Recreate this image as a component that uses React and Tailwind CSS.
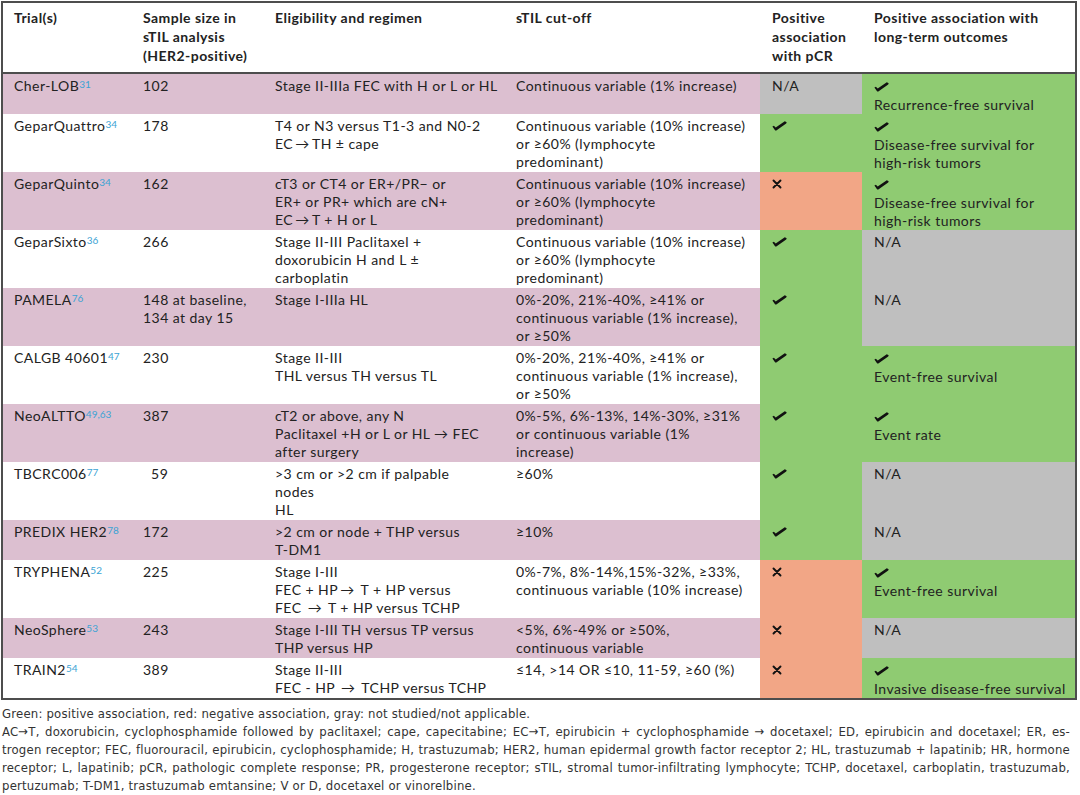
import React from "react";

const PINK = "bg-[#dcbfd0]";
const WHITE = "bg-white";
const CELL = {
  na: "bg-[#bfbfbf]",
  yes: "bg-[#8fcb72]",
  no: "bg-[#f2a686]",
};

const rows = [
  {
    trial: "Cher-LOB",
    sup: "31",
    n: ["102"],
    elig: ["Stage II-IIIa FEC with H or L or HL"],
    cut: ["Continuous variable (1% increase)"],
    pcr: "na",
    out: "yes",
    outText: ["Recurrence-free survival"],
  },
  {
    trial: "GeparQuattro",
    sup: "34",
    n: ["178"],
    elig: ["T4 or N3 versus T1-3 and N0-2", "EC\u2009\u2192\u2009TH \u00b1 cape"],
    cut: ["Continuous variable (10% increase)", "or \u226560% (lymphocyte", "predominant)"],
    pcr: "yes",
    out: "yes",
    outText: ["Disease-free survival for", "high-risk tumors"],
  },
  {
    trial: "GeparQuinto",
    sup: "34",
    n: ["162"],
    elig: ["cT3 or CT4 or ER+/PR\u2212 or", "ER+ or PR+ which are cN+", "EC\u2009\u2192\u2009T + H or L"],
    cut: ["Continuous variable (10% increase)", "or \u226560% (lymphocyte", "predominant)"],
    pcr: "no",
    out: "yes",
    outText: ["Disease-free survival for", "high-risk tumors"],
  },
  {
    trial: "GeparSixto",
    sup: "36",
    n: ["266"],
    elig: ["Stage II-III Paclitaxel +", "doxorubicin H and L \u00b1", "carboplatin"],
    cut: ["Continuous variable (10% increase)", "or \u226560% (lymphocyte", "predominant)"],
    pcr: "yes",
    out: "na",
  },
  {
    trial: "PAMELA",
    sup: "76",
    n: ["148 at baseline,", "134 at day 15"],
    elig: ["Stage I-IIIa HL"],
    cut: ["0%-20%, 21%-40%, \u226541% or", "continuous variable (1% increase),", "or \u226550%"],
    pcr: "yes",
    out: "na",
  },
  {
    trial: "CALGB 40601",
    sup: "47",
    n: ["230"],
    elig: ["Stage II-III", "THL versus TH versus TL"],
    cut: ["0%-20%, 21%-40%, \u226541% or", "continuous variable (1% increase),", "or \u226550%"],
    pcr: "yes",
    out: "yes",
    outText: ["Event-free survival"],
  },
  {
    trial: "NeoALTTO",
    sup: "49,63",
    n: ["387"],
    elig: ["cT2 or above, any N", "Paclitaxel +H or L or HL \u2192 FEC", "after surgery"],
    cut: ["0%-5%, 6%-13%, 14%-30%, \u226531%", "or continuous variable (1%", "increase)"],
    pcr: "yes",
    out: "yes",
    outText: ["Event rate"],
  },
  {
    trial: "TBCRC006",
    sup: "77",
    n: ["\u00a0\u00a059"],
    elig: [">3 cm or >2 cm if palpable", "nodes", "HL"],
    cut: ["\u226560%"],
    pcr: "yes",
    out: "na",
  },
  {
    trial: "PREDIX HER2",
    sup: "78",
    n: ["172"],
    elig: [">2 cm or node + THP versus", "T-DM1"],
    cut: ["\u226510%"],
    pcr: "yes",
    out: "na",
  },
  {
    trial: "TRYPHENA",
    sup: "52",
    n: ["225"],
    elig: ["Stage I-III", "FEC + HP\u2009\u2192\u2009 T + HP versus", "FEC \u2009\u2192\u2009 T + HP versus TCHP"],
    cut: ["0%-7%, 8%-14%,15%-32%, \u226533%,", "continuous variable (10% increase)"],
    pcr: "no",
    out: "yes",
    outText: ["Event-free survival"],
  },
  {
    trial: "NeoSphere",
    sup: "53",
    n: ["243"],
    elig: ["Stage I-III TH versus TP versus", "THP versus HP"],
    cut: ["<5%, 6%-49% or \u226550%,", "continuous variable"],
    pcr: "no",
    out: "na",
  },
  {
    trial: "TRAIN2",
    sup: "54",
    n: ["389"],
    elig: ["Stage II-III", "FEC - HP \u2009\u2192\u2009 TCHP versus TCHP"],
    cut: ["\u226414, >14 OR \u226410, 11-59, \u226560 (%)"],
    pcr: "no",
    out: "yes",
    outText: ["Invasive disease-free survival"],
  },
];

// brush style tick, like the one in the printed table
const Check = () => (
  <svg width="15" height="10" viewBox="0 0 15 10" className="inline-block">
    <path d="M0.4 5.6 L1.9 4.8 L3.7 6.6 L12.8 0.3 L14.7 1.2 L14.2 2.6 L4.3 9.4 L3.2 9.4 Z" fill="#111" />
  </svg>
);

const Cross = () => (
  <svg width="10" height="10" viewBox="0 0 10 10" className="inline-block">
    <path d="M1.5 1.5 L8.5 8.5 M8.5 1.5 L1.5 8.5" stroke="#111" strokeWidth="1.9" strokeLinecap="round" />
  </svg>
);

const Lines = ({ lines }) => (
  <>
    {lines.map((l, i) => (
      <div key={i} className="whitespace-pre">
        {l}
      </div>
    ))}
  </>
);

const cellPad = "pl-[11px] pt-[3px] pb-[1px]";

function Row({ row, idx }) {
  const bg = idx % 2 === 0 ? PINK : WHITE;
  return (
    <div className="grid grid-cols-[129px_132px_241px_255px_102px_213px] leading-[18px]">
      <div className={`${bg} ${cellPad}`}>
        {row.trial}
        <sup className="text-[10px] text-[#3ba3d4] tracking-normal relative -top-[3px]">{row.sup}</sup>
      </div>
      <div className={`${bg} ${cellPad}`}>
        <Lines lines={row.n} />
      </div>
      <div className={`${bg} ${cellPad}`}>
        <Lines lines={row.elig} />
      </div>
      <div className={`${bg} ${cellPad}`}>
        <Lines lines={row.cut} />
      </div>
      <div className={`${CELL[row.pcr]} pl-[12px] pt-[3px]`}>
        {row.pcr === "na" && "N/A"}
        {row.pcr === "yes" && (
          <div className="h-[18px] flex items-center">
            <Check />
          </div>
        )}
        {row.pcr === "no" && (
          <div className="h-[18px] flex items-center">
            <Cross />
          </div>
        )}
      </div>
      <div className={`${CELL[row.out]} pl-[12px] pt-[3px]`}>
        {row.out === "na" && "N/A"}
        {row.out === "yes" && (
          <>
            <div className="h-[19px] flex items-center">
              <Check />
            </div>
            <Lines lines={row.outText} />
          </>
        )}
      </div>
    </div>
  );
}

export default function App() {
  return (
    <div className="w-[1080px] h-[795px] bg-white overflow-hidden font-['Lato',sans-serif] text-[14px] tracking-[0.45px] text-[#222]">
      <div className="ml-[1px] mt-[1px] w-[1076px] border-2 border-[#4d4d4d]">
        <div className="grid grid-cols-[129px_132px_241px_255px_102px_213px] font-bold leading-[19px] pt-[5px] pb-[7px] border-b-2 border-[#4d4d4d]">
          <div className="pl-[11px]">Trial(s)</div>
          <div className="pl-[11px]">
            <div>Sample size in</div>
            <div>sTIL analysis</div>
            <div>(HER2-positive)</div>
          </div>
          <div className="pl-[11px]">Eligibility and regimen</div>
          <div className="pl-[11px]">sTIL cut-off</div>
          <div className="pl-[12px]">
            <div>Positive</div>
            <div>association</div>
            <div>with pCR</div>
          </div>
          <div className="pl-[12px]">
            <div>Positive association with</div>
            <div>long-term outcomes</div>
          </div>
        </div>
        {rows.map((r, i) => (
          <Row key={r.trial} row={r} idx={i} />
        ))}
      </div>
      <div className="mt-[5px] pl-[2px] w-[1070px] font-['Liberation_Sans_Narrow','DejaVu_Sans_Condensed',sans-serif] text-[13px] tracking-[0.2px] leading-[18px] text-[#333]">
        <div>Green: positive association, red: negative association, gray: not studied/not applicable.</div>
        <div className="text-justify [text-align-last:justify]">
          AC{"\u2192"}T, doxorubicin, cyclophosphamide followed by paclitaxel; cape, capecitabine; EC{"\u2192"}T, epirubicin + cyclophosphamide {"\u2192"} docetaxel; ED, epirubicin and docetaxel; ER, es-
        </div>
        <div className="text-justify [text-align-last:justify]">
          trogen receptor; FEC, fluorouracil, epirubicin, cyclophosphamide; H, trastuzumab; HER2, human epidermal growth factor receptor 2; HL, trastuzumab + lapatinib; HR, hormone
        </div>
        <div className="text-justify [text-align-last:justify]">
          receptor; L, lapatinib; pCR, pathologic complete response; PR, progesterone receptor; sTIL, stromal tumor-infiltrating lymphocyte; TCHP, docetaxel, carboplatin, trastuzumab,
        </div>
        <div>pertuzumab; T-DM1, trastuzumab emtansine; V or D, docetaxel or vinorelbine.</div>
      </div>
    </div>
  );
}
